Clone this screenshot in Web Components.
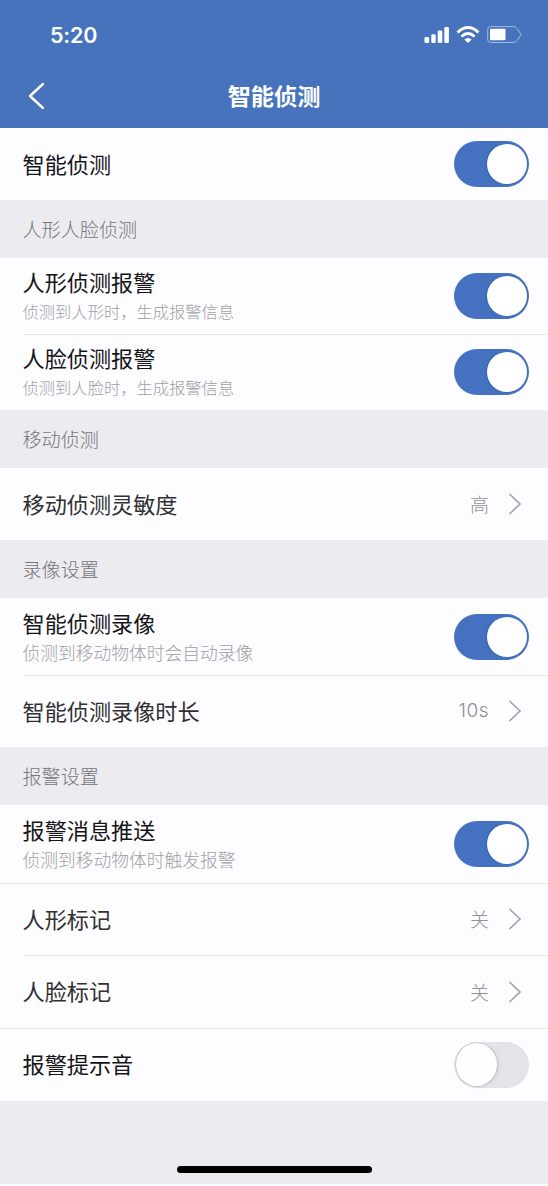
<!DOCTYPE html>
<html lang="zh-CN">
<head>
<meta charset="utf-8">
<title>智能侦测</title>
<style>
html,body{margin:0;padding:0}
body{width:548px;height:1186px;overflow:hidden;background:#fdfcfe;font-family:"Noto Sans CJK SC","Noto Sans",sans-serif}
</style>
</head>
<body>
<settings-page></settings-page>
<script>
const define=(name,html,setup)=>customElements.define(name,class extends HTMLElement{
  constructor(){super();this.attachShadow({mode:'open'}).innerHTML=html;}
  connectedCallback(){if(setup)setup(this,this.shadowRoot);}
});

define('status-bar',`<style>
:host{display:flex;height:64px;box-sizing:border-box;padding:4px 25px 0 50px;align-items:center;justify-content:space-between;color:#fff}
span{font:600 21.5px/30px Inter,sans-serif;letter-spacing:-.15px;padding-top:2px}
svg{display:block;margin-top:2px}
</style><span>5:20</span>
<svg width="99" height="22" viewBox="0 0 99 22" fill="#fff">
<rect x="0.5" y="13" width="4.6" height="6" rx="1.3"/><rect x="7.3" y="10.3" width="4.4" height="8.7" rx="1.2"/><rect x="13.7" y="6.5" width="4.6" height="12.5" rx="1.2"/><rect x="20.3" y="3" width="4.6" height="16" rx="1.2"/>
<g fill="none" stroke="#fff" stroke-width="2.8"><path d="M33.5 8.4Q44 -1.4 54.500 8.400"/><path d="M37.400 12.500Q44 6.400 50.600 12.500"/></g><path d="M40.300 15.500Q44 12.300 47.700 15.500L44 19.100Z"/>
<path d="M66.500 2.600H89q3 0 4.300 2.200l3.700 5.700-3.700 5.800Q92 18.500 89 18.500H66.500Q63.700 18.500 63.700 15.700V5.400Q63.700 2.600 66.500 2.600Z" fill="none" stroke="#a3bce2" stroke-width="1"/><rect x="66" y="4.800" width="15.500" height="11.500" rx="1"/>
</svg>`);

define('nav-bar',`<style>
:host{display:grid;grid-template-columns:60px 1fr 60px;align-items:center;height:64px;color:#fff}
svg{display:block;margin-left:27px}
h1{margin:-2px 0 0;text-align:center;font-size:23.200px;line-height:34px;font-weight:700}
</style><svg width="20" height="30" viewBox="0 0 20 30" fill="none" stroke="#fff" stroke-width="2.400" stroke-linecap="round" stroke-linejoin="round"><path d="M16 3L3 15L16 27"/></svg><h1><slot></slot></h1>`);

define('section-title',`<style>
:host{display:flex;align-items:center;height:58px;padding-left:22.500px;box-sizing:border-box;background:#ecebf0;color:#76767b;font-size:19.100px;line-height:28px;font-weight:300}
</style><slot></slot>`);

define('toggle-switch',`<style>
:host{display:flex;justify-content:flex-end;align-items:center;width:75px;height:46px;box-sizing:border-box;padding:0 2.500px;border-radius:23px;background:#4472c0}
i{width:40px;height:40px;border-radius:50%;background:#fff;box-shadow:-1px 0 2px #3462b3}
:host([off]){justify-content:flex-start;background:#e4e3e8;padding:0 1.500px}
:host([off]) i{width:41.500px;height:43px;background:#fefefe;box-shadow:0 0 1px .5px #b2b2b7,2px 1px 3px #d3d3d7}
</style><i></i>`);

define('setting-row',`<style>
:host{display:flex;position:relative;align-items:center;justify-content:space-between;height:var(--h,72px);box-sizing:border-box;padding:0 19px 0 22.500px;background:#fdfcfe}
.copy{display:flex;flex-direction:column;margin-top:-3px}
.label{font-size:22.150px;line-height:32px;color:#151517;font-weight:400}
:host([value]) .label{color:#303033}
.sub{font-size:var(--sub,17.750px);line-height:26px;padding-top:1px;color:#a0a0a5;font-weight:300;white-space:nowrap}
.end{display:flex;align-items:center}
.value{font-size:19px;line-height:28px;color:#909095;font-weight:300}
.value.latin{font-family:Inter,sans-serif;font-size:19px;letter-spacing:.5px}
.arrow{display:block;margin:0 7px 0 17px}
.line{position:absolute;left:0;right:0;bottom:-1px;height:1px;background:#e6e6eb;z-index:1;display:none}
:host([line]) .line{display:block}
:host([line=inset]) .line{left:24px}
</style><div class="copy"><div class="label"><slot></slot></div></div><div class="end"></div><div class="line"></div>`,(host,root)=>{
  const sub=host.getAttribute('sub'),value=host.getAttribute('value');
  if(sub)root.querySelector('.copy').insertAdjacentHTML('beforeend','<div class="sub">'+sub+'</div>');
  root.querySelector('.end').innerHTML=value
    ?'<span class="value'+(/^\w+$/.test(value)?' latin':'')+'">'+value+'</span><svg class="arrow" width="16" height="24" viewBox="0 0 16 24" fill="none" stroke="#a0a0a5" stroke-width="1.600"><path d="M3.500 2L14 12L3.500 22"/></svg>'
    :'<toggle-switch'+(host.hasAttribute('off')?' off':'')+'></toggle-switch>';
});

define('home-indicator',`<style>
:host{display:flex;justify-content:center;align-items:flex-end;height:83px;box-sizing:border-box;padding-bottom:11px;background:#ecebf0}
i{width:195px;height:7px;border-radius:4px;background:#000}
</style><i></i>`);

define('settings-page',`<style>
:host{display:flex;flex-direction:column;width:548px;height:1186px}
header{background:#4673bb;height:128px}
</style>
<header><status-bar></status-bar><nav-bar>智能侦测</nav-bar></header>
<setting-row>智能侦测</setting-row>
<section-title>人形人脸侦测</section-title>
<setting-row style="--h:76px;--sub:16.300px" line="inset" sub="侦测到人形时，生成报警信息">人形侦测报警</setting-row>
<setting-row style="--h:76px;--sub:16.300px" sub="侦测到人脸时，生成报警信息">人脸侦测报警</setting-row>
<section-title>移动侦测</section-title>
<setting-row value="高">移动侦测灵敏度</setting-row>
<section-title>录像设置</section-title>
<setting-row style="--h:77px" line="inset" sub="侦测到移动物体时会自动录像">智能侦测录像</setting-row>
<setting-row value="10s">智能侦测录像时长</setting-row>
<section-title>报警设置</section-title>
<setting-row style="--h:78px" line sub="侦测到移动物体时触发报警">报警消息推送</setting-row>
<setting-row line="inset" value="关">人形标记</setting-row>
<setting-row style="--h:73px" line value="关">人脸标记</setting-row>
<setting-row style="--h:73px" off>报警提示音</setting-row>
<home-indicator></home-indicator>`);
</script>
</body>
</html>
